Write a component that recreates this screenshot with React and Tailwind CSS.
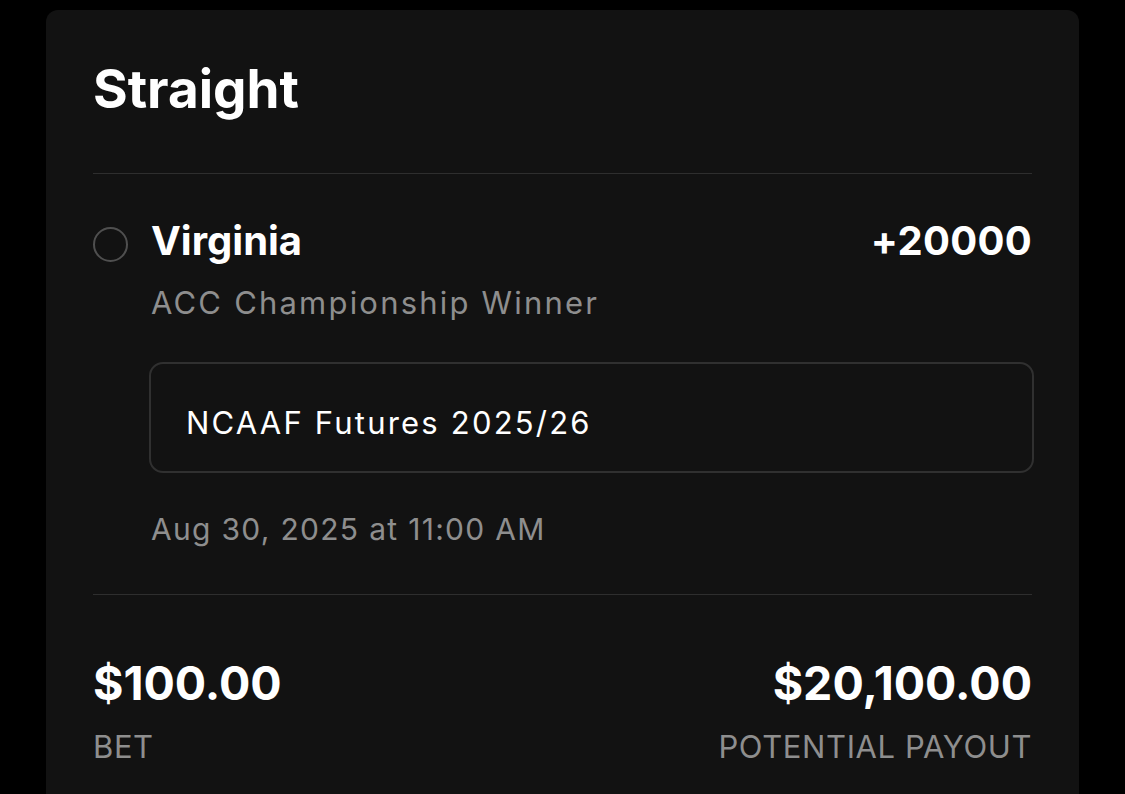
import React from "react";

const font = { fontFamily: "Inter, 'Noto Sans', sans-serif" };

const Divider = ({ className = "" }) => (
  <div className={`h-px w-full bg-[#2e2e2e] ${className}`} />
);

const BetSlip = () => {
  return (
    <div className="ml-[46px] mt-[10px] w-[1033px] rounded-[12px] bg-[#121212] px-[47px] pt-[53px] pb-[60px]">
      {/* header */}
      <h1 className="text-[53px] font-bold leading-[53px] text-white">Straight</h1>
      <Divider className="mt-[57px]" />

      {/* selection */}
      <div className="mt-[47px] flex items-start">
        <div className="mt-[6px] h-[35px] w-[35px] shrink-0 rounded-full border-2 border-[#4f4f4f]" />
        <div className="ml-[23px] flex-1">
          <div className="flex items-start justify-between">
            <span className="text-[40px] font-bold leading-[40px] text-white">Virginia</span>
            <span className="text-[40px] font-bold leading-[40px] tracking-[0.3px] text-white">+20000</span>
          </div>
          <div className="mt-[26px] text-[31px] leading-[31px] tracking-[2.2px] text-[#8e8e8e]">ACC Championship Winner</div>
          <div className="-mx-[2px] mt-[44px] rounded-[14px] border-2 border-[#303030] pl-[35px] pt-[43px] pb-[33px] text-[31px] leading-[31px] tracking-[2.2px] text-white">
            NCAAF Futures 2025/26
          </div>
          <div className="mt-[41px] text-[30px] leading-[30px] tracking-[1.3px] text-[#8e8e8e]">Aug 30, 2025 at 11:00 AM</div>
        </div>
      </div>
      <Divider className="mt-[50px]" />

      {/* totals */}
      <div className="mt-[65px] flex items-start justify-between">
        <div>
          <div className="text-[46.5px] font-bold leading-[46px] text-white">$100.00</div>
          <div className="mt-[25px] text-[31px] leading-[31px] tracking-[0.6px] text-[#8e8e8e]">BET</div>
        </div>
        <div className="text-right">
          <div className="text-[46.5px] font-bold leading-[46px] text-white">$20,100.00</div>
          <div className="mt-[25px] text-[31px] leading-[31px] tracking-[0.6px] text-[#8e8e8e]">POTENTIAL PAYOUT</div>
        </div>
      </div>
    </div>
  );
};

export default function App() {
  return (
    <div className="h-[794px] overflow-hidden bg-black" style={font}>
      <BetSlip />
    </div>
  );
}
